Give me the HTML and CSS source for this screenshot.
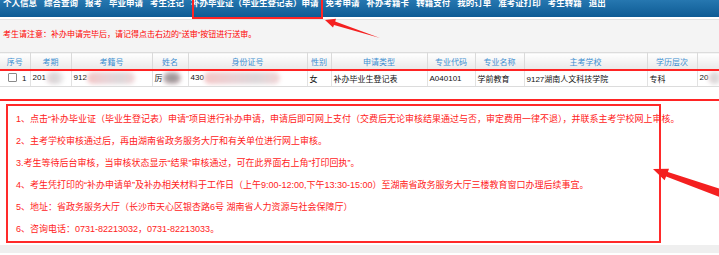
FILE: index.html
```html
<!DOCTYPE html>
<html>
<head>
	<meta charset="utf-8">
	<title>补办毕业证申请</title>
	<link rel="stylesheet" href="styles.css">
</head>
<body>
<div class="page">
	<ul class="nav">
		<li>个人信息</li>
		<li>综合查询</li>
		<li>报考</li>
		<li>毕业申请</li>
		<li>考生注记</li>
		<li>补办毕业证（毕业生登记表）申请</li>
		<li>免考申请</li>
		<li>补办考籍卡</li>
		<li>转籍支付</li>
		<li>我的订单</li>
		<li>准考证打印</li>
		<li>考生转籍</li>
		<li>退出</li>
	</ul>

	<div class="main">
		<p class="notice">考生请注意：补办申请完毕后，请记得点击右边的“送审”按钮进行送审。</p>

		<table class="grid">
			<colgroup>
				<col style="width:30px"><col style="width:41px"><col style="width:81px"><col style="width:36px">
				<col style="width:119px"><col style="width:24px"><col style="width:96px"><col style="width:48px">
				<col style="width:49px"><col style="width:123px"><col style="width:50px"><col style="width:42px">
			</colgroup>
			<thead>
				<tr>
					<th>序号</th><th>考期</th><th>考籍号</th><th>姓名</th><th>身份证号</th><th>性别</th>
					<th>申请类型</th><th>专业代码</th><th>专业名称</th><th>主考学校</th><th>学历层次</th><th></th>
				</tr>
			</thead>
			<tbody>
				<tr>
					<td class="first"><span class="check"></span>1</td>
					<td>201<span class="blur blur-grey" style="width:18px"></span></td>
					<td>912<span class="blur blur-pink" style="width:48px"></span></td>
					<td>厉<span class="blur blur-dark" style="width:18px"></span></td>
					<td>430<span class="blur blur-pink" style="width:76px"></span></td>
					<td>女</td>
					<td>补办毕业生登记表</td>
					<td>A040101</td>
					<td>学前教育</td>
					<td>9127湖南人文科技学院</td>
					<td>专科</td>
					<td>20<span class="blur blur-grey" style="width:14px"></span></td>
				</tr>
			</tbody>
		</table>

		<div class="tips">
			<p>1、点击“补办毕业证（毕业生登记表）申请”项目进行补办申请，申请后即可网上支付（交费后无论审核结果通过与否，审定费用一律不退），并联系主考学校网上审核。</p>
			<p>2、主考学校审核通过后，再由湖南省政务服务大厅和有关单位进行网上审核。</p>
			<p>3.考生等待后台审核，当审核状态显示“结果”审核通过，可在此界面右上角“打印回执”。</p>
			<p>4、考生凭打印的“补办申请单”及补办相关材料于工作日（上午9:00-12:00,下午13:30-15:00）至湖南省政务服务大厅三楼教育窗口办理后续事宜。</p>
			<p>5、地址：省政务服务大厅（长沙市天心区银杏路6号 湖南省人力资源与社会保障厅）</p>
			<p>6、咨询电话：0731-82213032，0731-82213033。</p>
		</div>
	</div>
	<div class="foot"></div>

	<!-- annotations -->
	<div class="mark mark-nav"></div>
	<div class="mark mark-row"></div>
	<svg class="arrows" width="719" height="255" viewBox="0 0 719 255">
		<polygon points="325,20 336,18.8 335.2,21.6 380,38 334,25 333,27.5" fill="#f42020"/>
		<polygon points="653,169 669,168.8 667.9,171.9 741.8,196 738.2,204 666.1,176.5 664.6,180.2" fill="#f42020"/>
	</svg>
</div>
</body>
</html>
```

FILE: styles.css
```css
* {
	box-sizing: border-box;
}
body {
	margin: 0;
	background: #fff;
	font-family: 'Liberation Sans', 'Noto Sans CJK SC', sans-serif;
}
.page {
	position: relative;
	width: 719px;
	height: 255px;
	overflow: hidden;
}
.nav {
	display: flex;
	gap: 7px;
	margin: 0;
	padding: 0 0 0 3px;
	height: 17px;
	list-style: none;
	background: linear-gradient(#2677b0, #0e5b94);
	overflow: hidden;
}
.nav li {
	color: #fff;
	font-size: 8.5px;
	font-weight: bold;
	line-height: 8px;
	white-space: nowrap;
	margin-top: -1px;
}
.main {
	margin-top: 2px;
	border-top: 1px solid #e2e2e2;
}
.notice {
	margin: 0;
	height: 32px;
	padding-left: 3px;
	line-height: 30px;
	font-size: 8px;
	color: #f00;
	background: #f4f4f4;
}
.grid {
	table-layout: fixed;
	width: 739px;
	border-collapse: collapse;
	border-top: 1px solid #dcdcdc;
	font-size: 8px;
}
.grid th {
	height: 17px;
	padding: 0;
	font-weight: normal;
	color: #3d8fd1;
	text-align: center;
	background: linear-gradient(#fff, #e9e9e9);
	border-right: 1px solid #dadada;
	border-bottom: 1px solid #dadada;
}
.grid td {
	height: 17px;
	padding: 0 0 0 2px;
	color: #111;
	white-space: nowrap;
	overflow: hidden;
	border-right: 1px solid #e2e2e2;
	border-bottom: 1px solid #dcdcdc;
}
.grid td.first {
	padding-left: 8px;
}
.check {
	display: inline-block;
	width: 9px;
	height: 9px;
	margin-right: 5px;
	vertical-align: -1px;
	border: 1px solid #8a8a8a;
	border-radius: 1px;
	background: #fff;
}
.blur {
	display: inline-block;
	height: 12px;
	vertical-align: middle;
	filter: blur(2px);
	border-radius: 6px;
}
.blur-grey {
	background: linear-gradient(90deg, #eadcde, #d8d4d6, #eee);
}
.blur-pink {
	background: linear-gradient(90deg, #f4c6c6, #e8d2d6 40%, #dcd8da 70%, #f2d4d6);
}
.blur-dark {
	background: radial-gradient(#8c8c8c, #b9aaae 60%, #f0d0d0);
}
.tips {
	width: 655px;
	height: 139px;
	margin: 17px 0 0 6px;
	padding: 2px 8px 0;
	border: 2px solid #ff2a2a;
}
.tips p {
	margin: 0;
	font-size: 9px;
	line-height: 22px;
	color: #f22;
	white-space: nowrap;
}
.foot {
	margin-top: 2px;
	height: 8px;
	background: #efefef;
}
.mark {
	position: absolute;
	border: 2px solid #ff2424;
}
.mark-nav {
	left: 192px;
	top: -3px;
	width: 131px;
	height: 22px;
}
.mark-row {
	left: -4px;
	top: 69px;
	width: 727px;
	height: 32px;
}
.arrows {
	position: absolute;
	left: 0;
	top: 0;
	pointer-events: none;
}
```
